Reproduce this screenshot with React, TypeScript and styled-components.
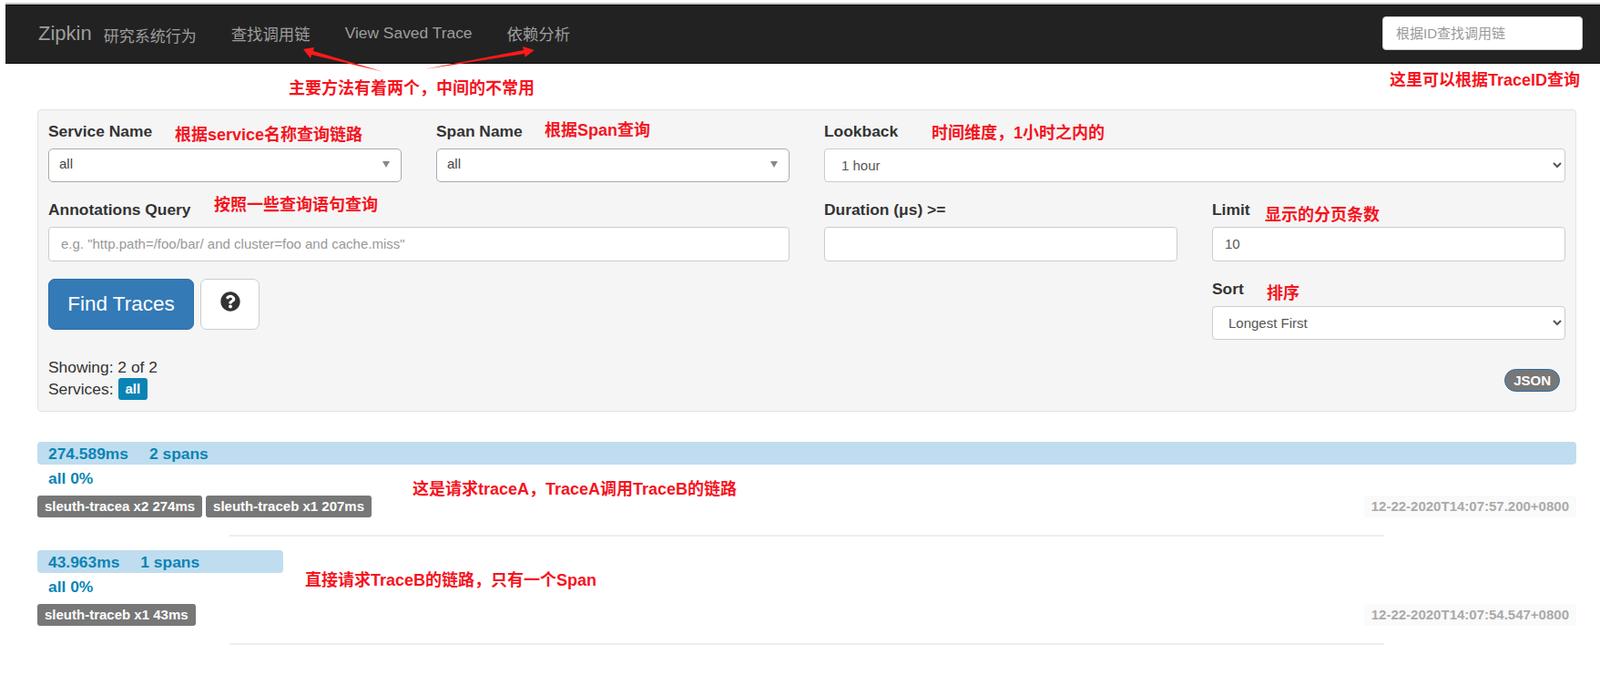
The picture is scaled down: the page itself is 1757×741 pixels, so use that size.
import { createGlobalStyle } from "styled-components";
import styled from "styled-components";
import { FaQuestionCircle } from "react-icons/fa";

const FONT = `"Liberation Sans", "Noto Sans CJK SC", Arial, sans-serif`;

const GlobalStyle = createGlobalStyle`
  html, body {
    margin: 0;
    padding: 0;
    background: #fff;
  }

  body {
    font-family: ${FONT};
    font-size: 17.4px;
    color: #333;
  }

  * {
    box-sizing: border-box;
  }
`;

const Page = styled.div`
  position: relative;
  width: 1757px;
  height: 741px;
  overflow: hidden;
  padding-top: 3px;
`;

const Navbar = styled.nav`
  display: flex;
  align-items: center;
  height: 67px;
  margin-left: 6px;
  padding: 0 19px 0 36px;
  background: #222;
  border-top: 2px solid #c6c6c6;
  border-bottom: 1px solid #080808;
  box-shadow: inset 0 1px 0 #080808;
`;

const Brand = styled.span`
  font-size: 22px;
  color: #9d9d9d;
  margin-right: 13px;
`;

const Tagline = styled.span`
  font-size: 17px;
  color: #9d9d9d;
  margin-top: 3px;
  margin-right: 38px;
`;

const NavLink = styled.a`
  font-size: 17.4px;
  color: #9d9d9d;
  margin-right: 38px;
  margin-top: -2px;
`;

const NavSearch = styled.input`
  width: 220px;
  height: 37px;
  margin-left: auto;
  margin-top: -2px;
  padding: 0 14px;
  font-family: ${FONT};
  font-size: 15px;
  background: #fff;
  border: 1px solid #ccc;
  border-radius: 4px;

  &::placeholder {
    color: #999;
    opacity: 1;
  }
`;

const Main = styled.main`
  padding: 50px 26px 0 41px;
`;

const Panel = styled.section`
  height: 332px;
  padding: 12px 11px 0 11px;
  background: #f5f5f5;
  border: 1px solid #e3e3e3;
  border-radius: 4px;
`;

const FormGrid = styled.div`
  display: grid;
  grid-template-columns: repeat(4, 388px);
  column-gap: 38px;
  row-gap: 19px;
`;

const Field = styled.div<{ $span?: number }>`
  grid-column: span ${(props) => props.$span ?? 1};
  min-width: 0;
`;

const Label = styled.label`
  display: block;
  height: 24px;
  margin-bottom: 6px;
  font-size: 17.4px;
  font-weight: 700;
  line-height: 23px;
  color: #333;
`;

const ChosenSelect = styled.div`
  position: relative;
  height: 37px;
  padding-left: 11px;
  font-size: 15px;
  line-height: 32px;
  color: #444;
  background: #fff;
  border: 1px solid #aaa;
  border-radius: 5px;

  &:after {
    content: "";
    position: absolute;
    top: 13px;
    right: 12px;
    border-left: 4.5px solid transparent;
    border-right: 4.5px solid transparent;
    border-top: 7px solid #888;
  }
`;

const NativeSelect = styled.select<{ $height: number; $indent: number }>`
  display: block;
  width: 100%;
  height: ${(props) => props.$height}px;
  padding-left: ${(props) => props.$indent}px;
  font-family: ${FONT};
  font-size: 15px;
  color: #555;
  background: #fff;
  border: 1px solid #ccc;
  border-radius: 4px;
`;

const TextInput = styled.input`
  display: block;
  width: 100%;
  height: 38px;
  padding: 0 13px 2px;
  font-family: ${FONT};
  font-size: 15px;
  color: #555;
  background: #fff;
  border: 1px solid #ccc;
  border-radius: 4px;

  &::placeholder {
    color: #999;
    opacity: 1;
  }
`;

const Actions = styled.div`
  grid-column: span 3;
  display: flex;
  align-items: flex-start;
  gap: 7px;
`;

const FindButton = styled.button`
  width: 160px;
  height: 56px;
  font-family: ${FONT};
  font-size: 22.5px;
  color: #fff;
  background: #337ab7;
  border: 1px solid #2e6da4;
  border-radius: 7px;
`;

const HelpButton = styled.button`
  display: flex;
  align-items: center;
  justify-content: center;
  width: 65px;
  height: 56px;
  padding: 0 0 6px;
  color: #333;
  background: #fff;
  border: 1px solid #ccc;
  border-radius: 7px;
`;

const Footer = styled.div`
  display: flex;
  align-items: flex-start;
  justify-content: space-between;
  padding: 18px 6px 0 0;
`;

const Summary = styled.div`
  line-height: 24px;
`;

const ServiceBadge = styled.span`
  display: inline-block;
  height: 24px;
  margin-left: 5px;
  padding: 0 8px;
  font-size: 15px;
  font-weight: 700;
  line-height: 24px;
  color: #fff;
  vertical-align: top;
  background: #0a84b5;
  border-radius: 3px;
`;

const JsonPill = styled.span`
  margin-top: 14px;
  height: 25px;
  padding: 0 9px;
  font-size: 15px;
  font-weight: 700;
  line-height: 23px;
  color: #fff;
  background: #777;
  border: 1px solid #2e6da4;
  border-radius: 13px;
`;

const Results = styled.div`
  padding-top: 33px;
`;

const Bar = styled.div`
  display: flex;
  gap: 23px;
  height: 25px;
  padding-left: 12px;
  font-size: 17.4px;
  font-weight: 700;
  line-height: 27px;
  color: #0a84b5;
  white-space: nowrap;
  background: #bfddef;
  border-radius: 4px;
`;

const ServicePercent = styled.div`
  height: 34px;
  padding: 3px 0 0 12px;
  font-size: 17.4px;
  font-weight: 700;
  line-height: 25px;
  color: #0a84b5;
`;

const TagRow = styled.div`
  display: flex;
  gap: 4px;
`;

const SpanTag = styled.span`
  height: 24px;
  padding: 0 8px;
  font-size: 15px;
  font-weight: 700;
  line-height: 24px;
  color: #fff;
  white-space: nowrap;
  background: #777;
  border-radius: 3px;
`;

const Timestamp = styled.span`
  height: 24px;
  margin-left: auto;
  padding: 0 8px;
  font-size: 15px;
  font-weight: 700;
  line-height: 24px;
  color: #aaa;
  white-space: nowrap;
  background: #fafafa;
  border-radius: 3px;
`;

const Divider = styled.hr`
  width: 75%;
  height: 2px;
  margin: 19px auto 15px;
  background: #eee;
  border: 0;
`;

// Red notes pasted on top of the screenshot
const Note = styled.span<{ $left: number; $top: number }>`
  position: absolute;
  left: ${(props) => props.$left}px;
  top: ${(props) => props.$top}px;
  font-family: "Liberation Sans", "Noto Sans CJK SC", sans-serif;
  font-size: 18px;
  font-weight: 700;
  line-height: 24px;
  color: #f5141e;
  white-space: nowrap;
`;

const ArrowLayer = styled.svg`
  position: absolute;
  left: 0;
  top: 0;
`;

const notes = [
  { text: "主要方法有着两个，中间的不常用", left: 317, top: 85 },
  { text: "这里可以根据TraceID查询", left: 1526, top: 76 },
  { text: "根据service名称查询链路", left: 192, top: 136 },
  { text: "根据Span查询", left: 598, top: 131 },
  { text: "时间维度，1小时之内的", left: 1023, top: 134 },
  { text: "按照一些查询语句查询", left: 235, top: 213 },
  { text: "显示的分页条数", left: 1389, top: 224 },
  { text: "排序", left: 1391, top: 310 },
  { text: "这是请求traceA，TraceA调用TraceB的链路", left: 453, top: 525 },
  { text: "直接请求TraceB的链路，只有一个Span", left: 335, top: 625 },
];

const traces = [
  {
    duration: "274.589ms",
    spans: "2 spans",
    width: "100%",
    tags: ["sleuth-tracea x2 274ms", "sleuth-traceb x1 207ms"],
    time: "12-22-2020T14:07:57.200+0800",
  },
  {
    duration: "43.963ms",
    spans: "1 spans",
    width: "270px",
    tags: ["sleuth-traceb x1 43ms"],
    time: "12-22-2020T14:07:54.547+0800",
  },
];

export default function App() {
  return (
    <Page>
      <GlobalStyle />

      <Navbar>
        <Brand>Zipkin</Brand>
        <Tagline>研究系统行为</Tagline>
        <NavLink>查找调用链</NavLink>
        <NavLink>View Saved Trace</NavLink>
        <NavLink>依赖分析</NavLink>
        <NavSearch placeholder="根据ID查找调用链" />
      </Navbar>

      <Main>
        <Panel>
          <FormGrid>
            <Field>
              <Label>Service Name</Label>
              <ChosenSelect>all</ChosenSelect>
            </Field>
            <Field>
              <Label>Span Name</Label>
              <ChosenSelect>all</ChosenSelect>
            </Field>
            <Field $span={2}>
              <Label>Lookback</Label>
              <NativeSelect $height={37} $indent={14}>
                <option>1 hour</option>
              </NativeSelect>
            </Field>

            <Field $span={2}>
              <Label>Annotations Query</Label>
              <TextInput placeholder='e.g. "http.path=/foo/bar/ and cluster=foo and cache.miss"' />
            </Field>
            <Field>
              <Label>Duration (μs) &gt;=</Label>
              <TextInput />
            </Field>
            <Field>
              <Label>Limit</Label>
              <TextInput defaultValue="10" />
            </Field>

            <Actions>
              <FindButton>Find Traces</FindButton>
              <HelpButton>
                <FaQuestionCircle size={22} />
              </HelpButton>
            </Actions>
            <Field>
              <Label>Sort</Label>
              <NativeSelect $height={37} $indent={13}>
                <option>Longest First</option>
              </NativeSelect>
            </Field>
          </FormGrid>

          <Footer>
            <Summary>
              <div>Showing: 2 of 2</div>
              <div>
                Services:<ServiceBadge>all</ServiceBadge>
              </div>
            </Summary>
            <JsonPill>JSON</JsonPill>
          </Footer>
        </Panel>

        <Results>
          {traces.map((t) => (
            <div key={t.time}>
              <Bar style={{ width: t.width }}>
                <span>{t.duration}</span>
                <span>{t.spans}</span>
              </Bar>
              <ServicePercent>all 0%</ServicePercent>
              <TagRow>
                {t.tags.map((tag) => (
                  <SpanTag key={tag}>{tag}</SpanTag>
                ))}
                <Timestamp>{t.time}</Timestamp>
              </TagRow>
              <Divider />
            </div>
          ))}
        </Results>
      </Main>

      {notes.map((n) => (
        <Note key={n.text} $left={n.left} $top={n.top}>
          {n.text}
        </Note>
      ))}

      <ArrowLayer width="1757" height="100" viewBox="0 0 1757 100">
        <polygon
          points="333,54 345,52 344,56 420.7,78.7 342,60 341,64"
          fill="#ff1a1a"
        />
        <polygon
          points="586.7,55 574,51 575,55 466,76 576,59 576.7,62.7"
          fill="#ff1a1a"
        />
      </ArrowLayer>
    </Page>
  );
}
